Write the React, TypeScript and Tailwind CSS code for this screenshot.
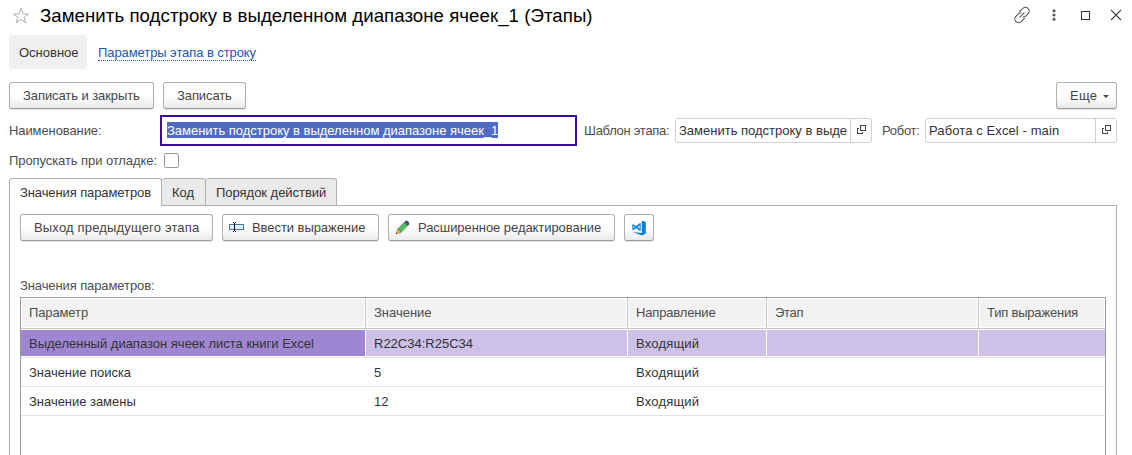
import type { ReactNode } from "react";

const BTN =
  "flex items-center h-[27px] rounded-[3px] border border-[#b0b0b0] border-b-[#999] bg-linear-to-b from-white from-50% to-[#eaeaea] text-[#444] shadow-[0_1px_0_#e4e4e4]";

function Button({ className, children }: { className: string; children?: ReactNode }) {
  return <button className={`${BTN} ${className}`}>{children}</button>;
}

function OpenIcon() {
  return (
    <svg width="9" height="10" viewBox="0 0 9 10" fill="#444" shapeRendering="crispEdges">
      <path d="M3 0H9V6H3ZM4 1V5H8V1ZM0 3H2V4H1V8H5V7H6V9H0Z" fillRule="evenodd" />
    </svg>
  );
}

function RefField({ className, spacing, text }: { className: string; spacing: string; text: string }) {
  return (
    <div className={`flex h-[25px] rounded-[3px] border border-[#d0d0d0] text-[#333] ${className}`}>
      <div className={`flex-1 overflow-hidden whitespace-nowrap pl-[3px] leading-[23px] ${spacing}`}>{text}</div>
      <div className="flex w-[21px] items-center justify-center border-l border-[#d0d0d0] pb-px pl-px">
        <OpenIcon />
      </div>
    </div>
  );
}

const COLS = "grid grid-cols-[345px_262px_139px_212px_126px]";

const HEADERS = [
  { text: "Параметр", spacing: "tracking-[-0.12px]" },
  { text: "Значение", spacing: "tracking-[-0.02px]" },
  { text: "Направление", spacing: "tracking-[-0.15px]" },
  { text: "Этап", spacing: "tracking-[-0.3px]" },
  { text: "Тип выражения", spacing: "tracking-[-0.2px]" },
];

const ROWS = [
  { name: "Значение поиска", value: "5", dir: "Входящий" },
  { name: "Значение замены", value: "12", dir: "Входящий" },
];

export default function App() {
  return (
    <div className="flex h-[455px] w-[1132px] flex-col overflow-hidden bg-white font-['Liberation_Sans',Arial,sans-serif] text-[13px] whitespace-nowrap text-[#4d4d4d]">
      <header className="flex h-[35px] items-center pt-px pr-[9px] pl-3">
        <svg width="18" height="18" viewBox="0 0 18 18" fill="none" stroke="#a9afb5" className="mb-1">
          <path d="M9 1.5L11 7H16.5L12.1 10.4L13.8 15.8L9 12.5L4.2 15.8L5.9 10.4L1.5 7H7Z" />
        </svg>
        <h1 className="ml-[10px] flex-1 pb-[5px] text-[18.67px] leading-[22px] tracking-[0.045px] text-black">
          Заменить подстроку в выделенном диапазоне ячеек_1 (Этапы)
        </h1>
        <div className="flex items-center pb-[6px]">
          <svg width="18" height="18" viewBox="0 0 18 18" fill="none" stroke="#555" strokeWidth="1.1" strokeLinecap="round">
            <path d="M6.6 5.6L9.6 2.6A3.4 3.4 0 0 1 15.2 7.6L12.6 10.2Q11.4 11.3 10.2 10.9M11.4 12.4L8.4 15.4A3.4 3.4 0 0 1 2.8 10.4L5.4 7.8Q6.6 6.7 7.8 7.1M6.9 11.1L11.1 6.9" />
          </svg>
          <svg width="4" height="12" viewBox="0 0 4 12" fill="#555" className="ml-[21px]">
            <circle cx="2" cy="1.7" r="1.5" />
            <circle cx="2" cy="6" r="1.5" />
            <circle cx="2" cy="10.3" r="1.5" />
          </svg>
          <span className="mt-px ml-[25px] size-[9px] border border-[#333]" />
          <svg width="12" height="12" viewBox="0 0 12 12" stroke="#444" strokeWidth="1.1" className="mr-px ml-[20px]">
            <path d="M1 1L11 11M11 1L1 11" />
          </svg>
        </div>
      </header>

      <nav className="flex h-[34px] items-center pl-[9px]">
        <div className="flex h-[34px] w-[78px] items-center rounded-[3px] bg-[#f0f0f0] pt-0.5 pl-[10px] text-[#333]">Основное</div>
        <a className="mt-[2px] ml-[11px] border-b border-dotted border-[#2a5db0] leading-[14px] tracking-[-0.08px] text-[#2456b0]">
          Параметры этапа в строку
        </a>
      </nav>

      <div className="mt-[13px] flex pr-[15px] pl-[9px]">
        <Button className="w-[145px] pl-[13px] tracking-[-0.08px]">Записать и закрыть</Button>
        <Button className="ml-[9px] w-[83px] pl-[13px] tracking-[-0.1px]">Записать</Button>
        <Button className="ml-auto w-[61px] pl-[13px] tracking-[0.3px]">
          Еще
          <svg width="6" height="3" viewBox="0 0 6 3" fill="#444" className="mt-[2px] ml-[6px]">
            <path d="M0 0H6L3 3Z" />
          </svg>
        </Button>
      </div>

      <div className="mt-[6px] flex h-[31px] items-center pl-[9px]">
        <label className="w-[151px] tracking-[-0.1px]">Наименование:</label>
        <div className="flex h-[31px] w-[417px] items-center border-2 border-[#3a0ca3] pb-px pl-[5px]">
          <span className="h-4 bg-[#4f6bc6] leading-[18px] tracking-[-0.02px] text-white">Заменить подстроку в выделенном диапазоне ячеек_1</span>
        </div>
        <label className="ml-[7px] w-[91px] tracking-[-0.28px]">Шаблон этапа:</label>
        <RefField className="w-[197px]" spacing="tracking-[0px]" text="Заменить подстроку в выде" />
        <label className="ml-[10px] w-[43px] tracking-[-0.3px]">Робот:</label>
        <RefField className="w-[192px]" spacing="tracking-[0.1px]" text="Работа с Excel - main" />
      </div>

      <div className="mt-[7px] flex h-[15px] items-center pl-[9px]">
        <label className="w-[155px] tracking-[-0.08px]">Пропускать при отладке:</label>
        <span className="size-[15px] rounded-[2px] border border-[#999]" />
      </div>

      <div className="mt-[10px] flex h-[28px] pl-[9px] text-[#333]">
        <div className="z-10 flex w-[153px] items-center rounded-t-[3px] border border-b-0 border-[#b0b0b0] bg-white pl-[10px] tracking-[-0.1px]">
          Значения параметров
        </div>
        <div className="flex w-[44px] items-center rounded-t-[3px] border border-l-0 border-[#b0b0b0] bg-[#eaeaea] pt-px pl-[10px]">Код</div>
        <div className="flex w-[131px] items-center rounded-t-[3px] border border-l-0 border-[#b0b0b0] bg-[#eaeaea] pt-px pl-[10px] tracking-[-0.03px]">
          Порядок действий
        </div>
        <div className="mr-[15px] flex-1 border-b border-[#b0b0b0]" />
      </div>

      <main className="mr-[15px] ml-[9px] flex flex-1 flex-col border-x border-[#b0b0b0] px-[10px] pt-2">
        <div className="flex gap-[9px]">
          <Button className="w-[193px] pl-[13px] tracking-[0.17px]">Выход предыдущего этапа</Button>
          <Button className="w-[157px] pl-[6px] tracking-[-0.06px]">
            <svg width="15" height="11" viewBox="0 0 15 11" fill="none" shapeRendering="crispEdges" className="mr-2">
              <path d="M0.5 2.5H14.5V7.5H0.5Z" stroke="#3f78a8" fill="#e6f1fa" />
              <path d="M4 0H5V1H6V0H7V1H6V9H7V10H6V9H5V10H4V9H5V1H4Z" fill="#000" />
            </svg>
            Ввести выражение
          </Button>
          <Button className="w-[227px] pl-[6px] tracking-[-0.06px]">
            <svg width="15" height="15" viewBox="0 0 15 15" className="mr-2">
              <path d="M1 14L2.6 8.8L6.2 12.4Z" fill="#f5ae4e" stroke="#9a6a2c" strokeWidth="0.5" />
              <path d="M1 14L1.5 12.4L2.6 13.5Z" fill="#333" />
              <path d="M2.8 8.8L9 2.6L12.4 6L6.2 12.2Z" fill="#56bd66" stroke="#3b8048" strokeWidth="0.6" />
              <path d="M9 2.4L10.6 0.8H12.4L14.2 2.6V4.4L12.6 6Z" fill="#44546a" />
            </svg>
            Расширенное редактирование
          </Button>
          <Button className="w-[30px] pl-[7px]">
            <svg width="15" height="16" viewBox="0 0 15 16" fill="#0c7fd0" fillRule="evenodd">
              <path d="M9.7 0.5L13.8 2V13.8L9.7 15.5L1 12L9.8 13V0.5Z" />
              <path d="M8.7 3V11L7.2 10.6L4.2 8.2L1.5 10.1L0.3 9.4V4.8L1.5 4.2L4.2 6.1L7.2 3.4ZM1.5 5.8V8.5L3 7.1ZM5.5 7.1L7.5 8.8V5.4Z" />
            </svg>
          </Button>
        </div>

        <div className="mt-[37px] h-[19px] leading-[15px] tracking-[-0.1px]">Значения параметров:</div>

        <div className="flex flex-1 flex-col border border-b-0 border-[#999]">
          <div className={`${COLS} h-[31px] border-b border-[#c6c6c6]`}>
            {HEADERS.map((h, i) => (
              <div key={h.text} className={i < 4 ? "flex border-r border-[#c6c6c6] p-px" : "flex p-px"}>
                <div className={`flex flex-1 items-center bg-[#f2f2f2] pl-[7px] ${h.spacing}`}>{h.text}</div>
              </div>
            ))}
          </div>
          <div className={`${COLS} mt-px h-[28px] border-b border-[#e3e3e3] pb-px text-[#333]`}>
            <div className="mr-px flex items-center bg-[#9f86d2] pt-px pl-2">Выделенный диапазон ячеек листа книги Excel</div>
            <div className="mr-px flex items-center bg-[#cdc1e8] pt-px pl-2">R22C34:R25C34</div>
            <div className="mr-px flex items-center bg-[#cdc1e8] pt-px pl-2 tracking-[0.2px]">Входящий</div>
            <div className="mr-px bg-[#cdc1e8]" />
            <div className="bg-[#cdc1e8]" />
          </div>
          {ROWS.map((r) => (
            <div key={r.name} className={`${COLS} h-[29px] border-b border-[#e3e3e3] pt-px text-[#333]`}>
              <div className="flex items-center pl-2 tracking-[-0.03px]">{r.name}</div>
              <div className="flex items-center pl-2">{r.value}</div>
              <div className="flex items-center pl-2 tracking-[0.2px]">{r.dir}</div>
            </div>
          ))}
        </div>
      </main>
    </div>
  );
}
